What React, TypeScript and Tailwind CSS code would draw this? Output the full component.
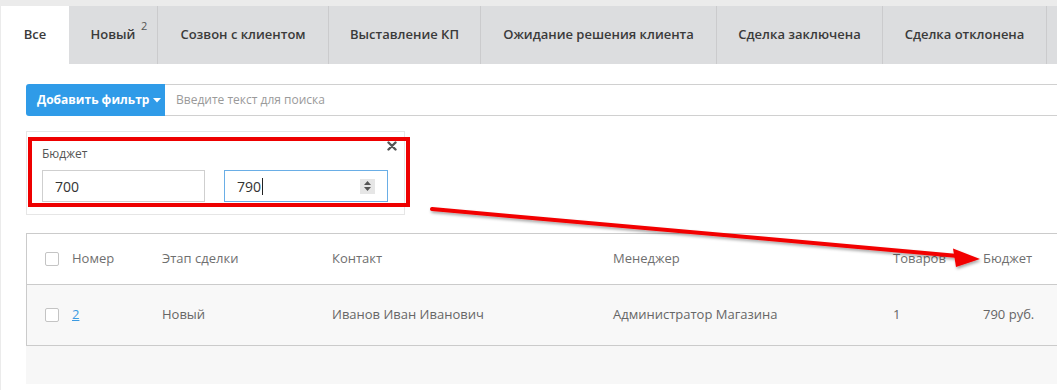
type Tab = { label: string; width: string; badge?: string; active?: boolean; sep?: boolean }

const tabs: Tab[] = [
  { label: 'Все', width: 'w-[68px]', active: true },
  { label: 'Новый', width: 'w-[88px]', badge: '2' },
  { label: 'Созвон с клиентом', width: 'w-[171px]', sep: true },
  { label: 'Выставление КП', width: 'w-[152px]', sep: true },
  { label: 'Ожидание решения клиента', width: 'w-[236px]', sep: true },
  { label: 'Сделка заключена', width: 'w-[166px]', sep: true },
  { label: 'Сделка отклонена', width: 'w-[164px]', sep: true },
  { label: '', width: 'w-[40px]', sep: true },
]

const Checkbox = () => (
  <span className="block h-[14px] w-[14px] rounded-[2px] border border-[#c4c4c4] bg-white" />
)

const TabBar = () => (
  <div className="flex h-[58px]">
    {tabs.map((tab, i) => (
      <div
        key={i}
        className={`relative flex shrink-0 items-center justify-center text-[13px] font-semibold text-[#3a3a3a] ${tab.width} ${
          tab.active ? 'bg-white' : 'bg-[#dcdddf]'
        } ${tab.sep ? 'border-l border-[#cbcbcd]' : ''}`}
      >
        {tab.label}
        {tab.badge && (
          <span className="absolute top-[12px] left-[72px] text-[11px] font-normal text-[#555]">
            {tab.badge}
          </span>
        )}
      </div>
    ))}
  </div>
)

const SearchBar = () => (
  <div className="mt-[20px] flex h-[32px]">
    <button className="flex w-[139px] shrink-0 items-center gap-[4px] rounded-l-[3px] bg-[#2f9be8] pl-[11px] text-[12px] font-bold text-white">
      Добавить фильтр
      <svg width="8" height="5" viewBox="0 0 8 5">
        <path d="M0 0h8L4 4.5z" fill="#fff" />
      </svg>
    </button>
    <div className="flex flex-1 items-center border-y border-[#d0d0d0] pl-[11px] text-[12px] text-[#9a9a9a]">
      Введите текст для поиска
    </div>
  </div>
)

const FilterPanel = () => (
  <div className="relative mt-[15px] h-[84px] w-[379px] border border-[#e6e6e6] bg-white pl-[15px] pt-[14px]">
    <div className="text-[12px] leading-[16px] text-[#555]">Бюджет</div>
    <svg className="absolute top-[9px] right-[7px]" width="10" height="10" viewBox="0 0 10 10">
      <path d="M1.5 1.5l7 7M8.5 1.5l-7 7" stroke="#555" strokeWidth="2.4" strokeLinecap="round" />
    </svg>
    <div className="mt-[8px] flex gap-[19px]">
      <div className="flex h-[32px] w-[163px] items-center border border-[#cfcfcf] pl-[12px] text-[14px] text-[#333]">
        700
      </div>
      <div className="flex h-[32px] w-[164px] items-center justify-between border border-[#6aaee6] pl-[12px] pr-[12px] text-[14px] text-[#333]">
        <span className="flex items-center">
          790
          <span className="ml-[1px] inline-block h-[17px] w-px bg-[#222]" />
        </span>
        <span className="flex h-[15px] w-[15px] flex-col items-center justify-center gap-[2px] bg-[#e6e6e6]">
          <svg width="7" height="4" viewBox="0 0 7 4">
            <path d="M0 4L3.5 0 7 4z" fill="#555" />
          </svg>
          <svg width="7" height="4" viewBox="0 0 7 4">
            <path d="M0 0h7L3.5 4z" fill="#555" />
          </svg>
        </span>
      </div>
    </div>
  </div>
)

const cols = [
  { head: 'Номер', width: 'w-[90px]' },
  { head: 'Этап сделки', width: 'w-[170px]' },
  { head: 'Контакт', width: 'w-[281px]' },
  { head: 'Менеджер', width: 'w-[280px]' },
  { head: 'Товаров', width: 'w-[90px]' },
  { head: 'Бюджет', width: 'w-[100px]' },
]

const row = ['2', 'Новый', 'Иванов Иван Иванович', 'Администратор Магазина', '1', '790 руб.']

const DealsTable = () => (
  <div className="mt-[18px] w-[1060px]">
    <div className="border border-[#cbcbcb] text-[13px]">
      <div className="flex h-[50px] items-center bg-white text-[#6f6f6f]">
        <div className="w-[45px] shrink-0 pl-[18px]">
          <Checkbox />
        </div>
        {cols.map((c) => (
          <div key={c.head} className={`shrink-0 ${c.width}`}>
            {c.head}
          </div>
        ))}
      </div>
      <div className="flex h-[61px] items-center border-t border-[#cbcbcb] bg-[#f8f8f8] text-[#666]">
        <div className="w-[45px] shrink-0 pl-[18px]">
          <Checkbox />
        </div>
        {row.map((v, i) => (
          <div key={i} className={`shrink-0 ${cols[i].width}`}>
            {i === 0 ? <span className="text-[#3c9be2] underline">{v}</span> : v}
          </div>
        ))}
      </div>
    </div>
    <div className="h-[38px] bg-[#f7f7f7]" />
  </div>
)

const Annotations = () => (
  <>
    <div className="pointer-events-none absolute top-[137px] left-[28px] h-[70px] w-[382px] border-[4px] border-[#ee0000]" />
    <svg className="pointer-events-none absolute inset-0" width="1057" height="390">
      <defs>
        <filter id="sh" x="-10%" y="-50%" width="120%" height="200%">
          <feDropShadow dx="1" dy="2" stdDeviation="1.5" floodColor="#000" floodOpacity="0.35" />
        </filter>
      </defs>
      <g filter="url(#sh)">
        <line x1="432" y1="209" x2="958" y2="256" stroke="#f20000" strokeWidth="4" strokeLinecap="round" />
        <path d="M980 259L953 248.5 956 267z" fill="#f20000" />
      </g>
    </svg>
  </>
)

export default function App() {
  return (
    <div
      className="relative h-[390px] w-[1057px] overflow-hidden bg-[#ebebeb] pt-[6px] pl-px"
      style={{ fontFamily: '"Open Sans", "Noto Sans", sans-serif' }}
    >
      <div className="h-full bg-white">
        <TabBar />
        <div className="pl-[25px]">
          <SearchBar />
          <FilterPanel />
          <DealsTable />
        </div>
      </div>
      <Annotations />
    </div>
  )
}
